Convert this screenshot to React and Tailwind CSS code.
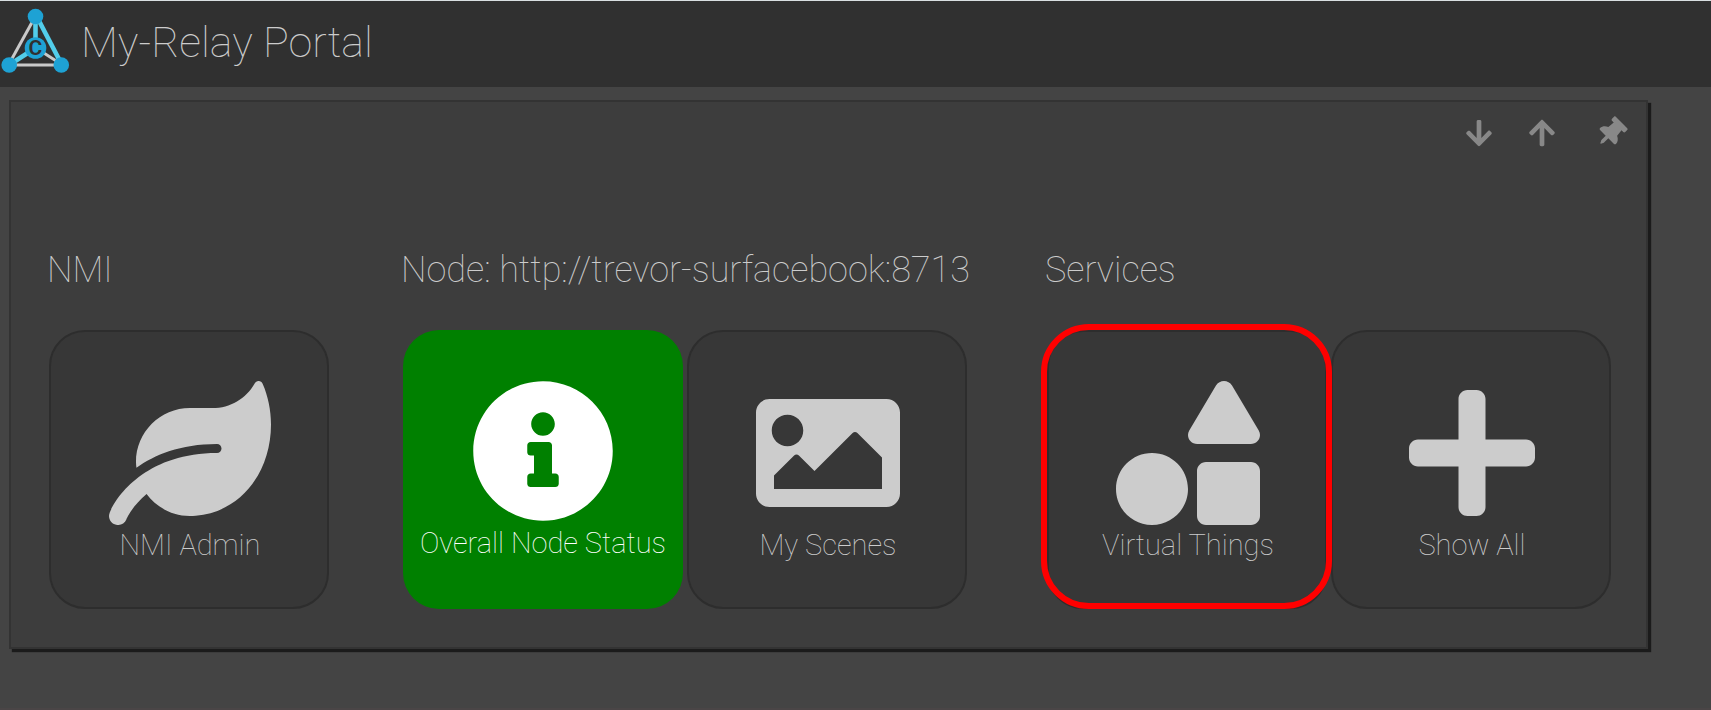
import React from "react";
import {
  FaLeaf,
  FaInfoCircle,
  FaImage,
  FaPlus,
  FaArrowDown,
  FaArrowUp,
  FaThumbtack,
} from "react-icons/fa";

function Logo() {
  return (
    <svg viewBox="0 0 72 80" className="h-20 w-18 shrink-0" aria-hidden="true">
      <g strokeWidth="3" stroke="#c9c9c9">
        <line x1="35" y1="16" x2="9" y2="63" />
        <line x1="9" y1="64" x2="61" y2="64" />
        <line x1="36" y1="47" x2="61" y2="63" />
      </g>
      <g strokeWidth="4.6" stroke="#52cdea">
        <line x1="35.5" y1="16" x2="35.5" y2="47" />
        <line x1="37" y1="16" x2="61.5" y2="63" />
        <line x1="35.5" y1="47" x2="9" y2="64" />
      </g>
      <g fill="#1ea2d4">
        <circle cx="35.5" cy="15.5" r="7.8" />
        <circle cx="9.2" cy="64" r="7.8" />
        <circle cx="61.3" cy="64" r="7.8" />
        <circle cx="35.5" cy="47" r="10.8" />
      </g>
      <text
        x="35.3"
        y="54.3"
        textAnchor="middle"
        fill="#303030"
        className="font-['Roboto',sans-serif] text-[21px] font-semibold"
      >
        C
      </text>
    </svg>
  );
}

function ShapesIcon({ className }) {
  return (
    <svg viewBox="0 0 512 512" fill="currentColor" className={className} aria-hidden="true">
      <path d="M512 320v160c0 17.67-14.33 32-32 32H320c-17.67 0-32-14.33-32-32V320c0-17.67 14.33-32 32-32h160c17.67 0 32 14.33 32 32zm-384-64C57.31 256 0 313.31 0 384s57.31 128 128 128 128-57.31 128-128-57.31-128-128-128zm351.03-32c25.34 0 41.18-26.67 28.51-48L412.51 16c-12.67-21.33-44.35-21.33-57.02 0l-95.03 160c-12.67 21.33 3.17 48 28.51 48h190.06z" />
    </svg>
  );
}

function Tile({ icon: Icon, label, wide = false, active = false, highlighted = false }) {
  const look = active
    ? "bg-[#008000] text-white"
    : "border-2 border-[#2d2d2d] bg-[#373737] pl-0.5 text-[#cccccc]";
  return (
    <div className="relative mx-0.5">
      <button
        type="button"
        className={`flex h-[279px] w-70 cursor-pointer flex-col items-center rounded-[36px] pt-[49px] ${look}`}
      >
        <Icon className={wide ? "h-36 w-[162px]" : "size-36"} />
        <span className="text-[29px] leading-10 font-thin whitespace-nowrap">{label}</span>
      </button>
      {highlighted && (
        <span className="pointer-events-none absolute -top-1.5 -right-[5px] bottom-0 -left-1.5 z-10 rounded-[48px] border-6 border-[#ff0000]" />
      )}
    </div>
  );
}

function Group({ title, children }) {
  return (
    <section>
      <h2 className="mb-[39px] pr-[5px] text-[36px] leading-[42px] font-thin whitespace-nowrap text-[#cccccc]">
        {title}
      </h2>
      <div className="flex">{children}</div>
    </section>
  );
}

function ToolButton({ label, children }) {
  return (
    <button type="button" aria-label={label} className="cursor-pointer">
      {children}
    </button>
  );
}

export default function App() {
  return (
    <div className="min-h-screen border-t border-b-2 border-t-[#d9dfe2] border-b-[#4a4546] bg-[#444444] font-['Roboto',sans-serif]">
      <header className="flex h-[86px] items-start bg-[#303030]">
        <Logo />
        <h1 className="pl-[9px] text-[43px] leading-[82px] font-thin text-[#cccccc]">
          My-Relay Portal
        </h1>
      </header>
      <main className="mt-[13px] mr-[63px] ml-[9px] border-2 border-[#333333] bg-[#3d3d3d] pb-[38px] shadow-[3px_3px_1px_#1b1b1b]">
        <div className="flex h-[46px] items-end justify-end gap-[33px] pr-5 text-[30px] text-[#888888]">
          <ToolButton label="Move down">
            <FaArrowDown />
          </ToolButton>
          <ToolButton label="Move up">
            <FaArrowUp />
          </ToolButton>
          <ToolButton label="Pin">
            <FaThumbtack className="ml-1.5 rotate-45" />
          </ToolButton>
        </div>
        <div className="mt-[101px] flex gap-[70px] pl-9">
          <Group title="NMI">
            <Tile icon={FaLeaf} label="NMI Admin" wide />
          </Group>
          <Group title="Node: http://trevor-surfacebook:8713">
            <Tile icon={FaInfoCircle} label="Overall Node Status" active />
            <Tile icon={FaImage} label="My Scenes" />
          </Group>
          <Group title="Services">
            <Tile icon={ShapesIcon} label="Virtual Things" highlighted />
            <Tile icon={FaPlus} label="Show All" />
          </Group>
        </div>
      </main>
    </div>
  );
}
